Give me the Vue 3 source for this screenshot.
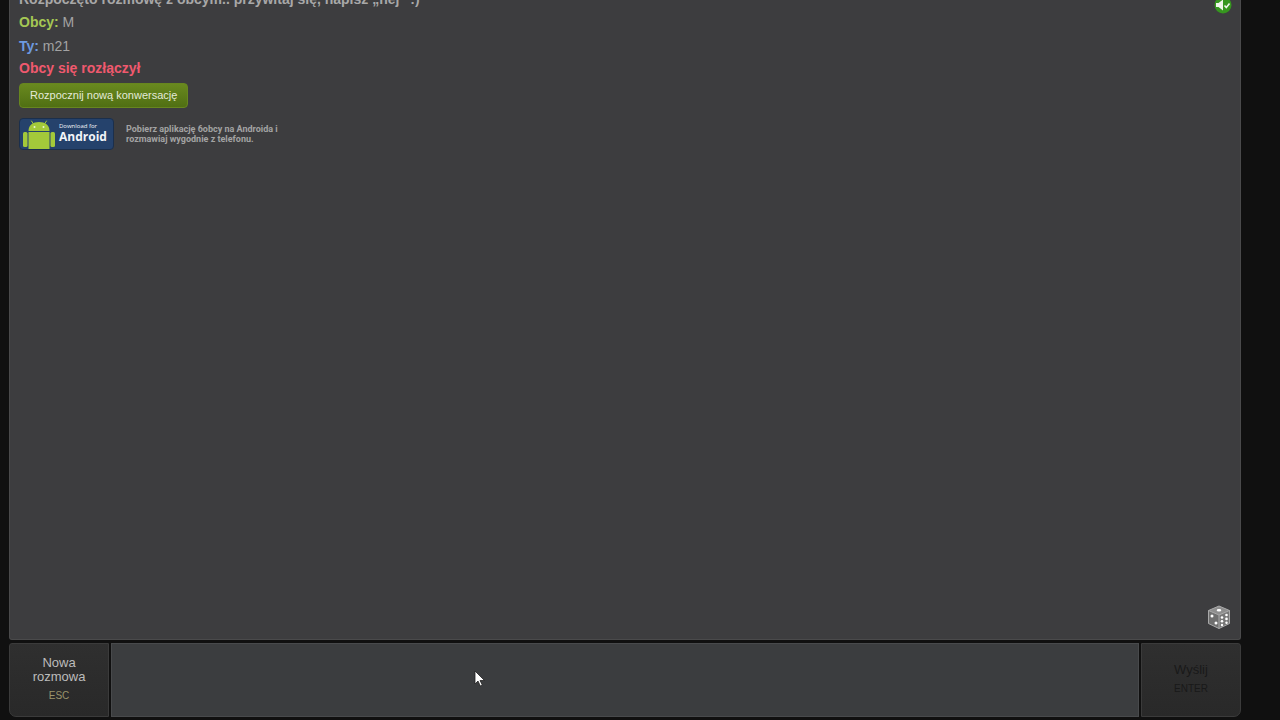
<script setup>
import { ref } from 'vue'

const message = ref('')
const entries = [
  { who: 'Obcy', kind: 'stranger', text: 'M' },
  { who: 'Ty', kind: 'me', text: 'm21' },
]
</script>

<template>
  <div class="page">
    <main class="log">
      <div class="messages">
        <p class="notice">Rozpoczęto rozmowę z obcym.. przywitaj się, napisz „hej” :)</p>
        <p v-for="entry in entries" :key="entry.who" class="entry">
          <strong :class="entry.kind">{{ entry.who }}:</strong> {{ entry.text }}
        </p>
        <p class="gone">Obcy się rozłączył</p>
        <button type="button" class="restart">Rozpocznij nową konwersację</button>
        <div class="promo">
          <a href="#android" class="badge">
            <svg class="robot" viewBox="0 0 34 30" aria-hidden="true">
              <g fill="#a3c93a">
                <path d="M6.500 12C6.500 6 11 3 17 3s10.500 3 10.500 9z" />
                <path d="M6.500 13h21v17h-21z" />
                <rect x="1" y="13" width="4.500" height="15" rx="1.500" />
                <rect x="28.500" y="13" width="4.500" height="15" rx="1.500" />
              </g>
              <path d="M11.500 5l-2-3M22.500 5l2-3" stroke="#a3c93a" stroke-linecap="round" />
              <circle cx="12.500" cy="8" r="1" fill="#e9f3d4" />
              <circle cx="21.500" cy="8" r="1" fill="#e9f3d4" />
            </svg>
            <span class="badge-text"><small>Download for</small><b>Android</b></span>
          </a>
          <p class="promo-text">Pobierz aplikację 6obcy na Androida i<br>rozmawiaj wygodnie z telefonu.</p>
        </div>
      </div>
      <button type="button" class="sound" aria-label="Dźwięk">
        <svg viewBox="0 0 18 18" aria-hidden="true">
          <circle cx="9" cy="9" r="8.500" fill="#36961f" />
          <path d="M2 7h2.500L9 3.500v11L4.500 11H2z" fill="#eef5ea" />
          <path d="M10.500 9.500l1.800 2 3.200-4" fill="none" stroke="#eef5ea" stroke-width="1.600" />
        </svg>
      </button>
      <button type="button" class="dice" aria-label="Losuj temat">
        <svg viewBox="0 0 24 24" aria-hidden="true">
          <path d="M12 1l10.500 4.500v13L12 23.500 1.500 18.500v-13z" fill="#777" />
          <path d="M12 1l10.500 4.500L12 10 1.500 5.500z" fill="#8e8e8e" />
          <path d="M1.500 5.500L12 10v13.500L1.500 18.500z" fill="#6f6f6f" />
          <path d="M1.500 5.500L12 10l10.500-4.500M12 10v13.500M12 1l10.500 4.500v13L12 23.500 1.500 18.500v-13z" fill="none" stroke="#a8a8a8" />
          <ellipse cx="12" cy="5.300" rx="2.300" ry="1.200" fill="#fff" />
          <g fill="#fff">
            <circle cx="5" cy="11" r="1.500" />
            <circle cx="9" cy="18" r="1.500" />
            <circle cx="15" cy="12.500" r="1.300" />
            <circle cx="19.500" cy="10" r="1.300" />
            <circle cx="15" cy="16.200" r="1.300" />
            <circle cx="19.500" cy="13.900" r="1.300" />
            <circle cx="15" cy="20" r="1.200" />
            <circle cx="19.500" cy="17.800" r="1.200" />
          </g>
        </svg>
      </button>
    </main>

    <form class="controls" @submit.prevent>
      <button type="button" class="action new">
        <span>Nowa<br>rozmowa</span>
        <small>ESC</small>
      </button>
      <textarea v-model="message" class="field" aria-label="Wiadomość"></textarea>
      <button type="submit" class="action send" disabled>
        <span>Wyślij</span>
        <small>ENTER</small>
      </button>
    </form>

    <svg class="pointer" viewBox="0 0 12 18" aria-hidden="true">
      <path d="M1 1v13l3-3 2.300 5 2-1L6 10.500h4.500z" fill="#fff" stroke="#222" stroke-width=".8" />
    </svg>
  </div>
</template>

<style>
body {
  background: #101010;
}
</style>

<style scoped>
.page {
  box-sizing: border-box;
  display: flex;
  flex-direction: column;
  gap: 3px;
  height: 100vh;
  padding: 0 39px 3px 9px;
  overflow: hidden;
  font-family: "Liberation Sans", Arial, sans-serif;
  font-size: 14px;
  color: #a3a3a3;
}

p {
  margin: 0;
}

button {
  font-family: inherit;
  cursor: pointer;
}

.log {
  position: relative;
  box-sizing: border-box;
  flex: 1;
  min-height: 0;
  overflow: hidden;
  padding: 0 8px;
  background: #3d3d3f;
  border: 1px solid #4a4a4b;
  border-top: 0;
  border-radius: 0 0 3px 3px;
}

.messages {
  display: flex;
  flex-direction: column;
  align-items: flex-start;
  margin-top: -12px;
  padding-left: 1px;
}

.notice {
  line-height: 22px;
  font-weight: bold;
  color: #a8a8a8;
}

.entry {
  line-height: 24px;
}

.stranger {
  color: #a5c854;
}

.me {
  color: #6d9ae0;
}

.gone {
  line-height: 20px;
  font-weight: bold;
  color: #f0596e;
}

.restart {
  height: 25px;
  margin-top: 5px;
  padding: 0 10px 2px;
  border: 1px solid #67861f;
  border-radius: 4px;
  background: linear-gradient(#69891f, #506f13);
  font-size: 11px;
  color: #e4ead8;
}

.promo {
  display: flex;
  align-items: center;
  gap: 12px;
  margin-top: 10px;
}

.badge {
  box-sizing: border-box;
  display: flex;
  align-items: center;
  gap: 3px;
  width: 95px;
  height: 32px;
  padding-left: 2px;
  border: 1px solid #1b2f4c;
  border-radius: 4px;
  background: #25426c;
  color: #f2f5f9;
  font-family: "Open Sans", "Noto Sans", sans-serif;
  text-decoration: none;
}

.robot {
  flex: none;
  width: 34px;
  height: 30px;
}

.badge-text {
  display: flex;
  flex-direction: column;
  padding-bottom: 3px;
}

.badge-text small {
  font-size: 6px;
  line-height: 9px;
  white-space: nowrap;
}

.badge-text b {
  font-size: 12px;
  line-height: 12px;
}

.promo-text {
  font-family: Roboto, "Liberation Sans", sans-serif;
  font-size: 9px;
  line-height: 10px;
  font-weight: bold;
  color: #a3a3a3;
}

.sound,
.dice {
  position: absolute;
  padding: 0;
  border: 0;
  background: none;
}

.sound {
  top: -4px;
  right: 8px;
  width: 18px;
  height: 18px;
}

.dice {
  right: 9px;
  bottom: 10px;
  width: 24px;
  height: 24px;
}

.sound svg,
.dice svg {
  display: block;
}

.controls {
  display: flex;
  gap: 2px;
  height: 74px;
}

.action {
  box-sizing: border-box;
  display: flex;
  flex-direction: column;
  align-items: center;
  justify-content: center;
  gap: 6px;
  width: 100px;
  padding: 0 0 2px;
  border: 1px solid #3b3b3b;
  background: linear-gradient(#2f2f2f, #292929);
  font-size: 13px;
  line-height: 14px;
  color: #bcbcbc;
}

.action small {
  font-size: 10px;
  line-height: 12px;
}

.new {
  border-radius: 3px 0 0 7px;
}

.new small {
  color: #9a946c;
}

.send {
  border-radius: 0 3px 7px 0;
  color: #191919;
}

.field {
  box-sizing: border-box;
  flex: 1;
  min-width: 0;
  margin: 0;
  padding: 8px;
  border: 1px solid #484a4c;
  background: #3b3d3f;
  font: inherit;
  color: #d0d0d0;
  resize: none;
  outline: 0;
}

.pointer {
  position: absolute;
  left: 474px;
  top: 670px;
  width: 12px;
  height: 18px;
  pointer-events: none;
}
</style>
